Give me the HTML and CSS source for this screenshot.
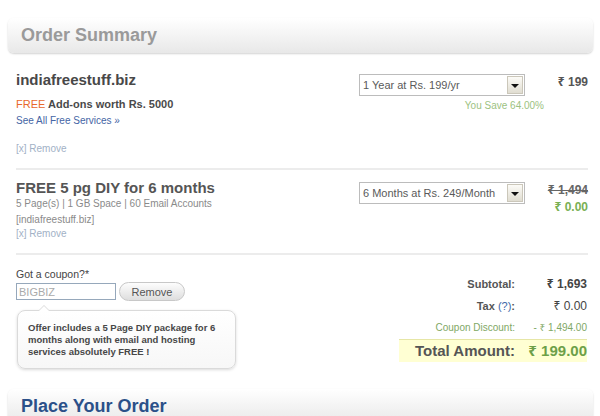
FILE: index.html
```html
<!DOCTYPE html>
<html>
<head>
    <title>Order Summary</title>
    <link rel="stylesheet" href="styles.css">
</head>
<body>
    <div class="page">
        <div class="panel-head">Order Summary</div>

        <div class="item">
            <div class="item-info">
                <div class="item-name">indiafreestuff.biz</div>
                <div class="addons"><span class="free">FREE</span> Add-ons worth Rs. 5000</div>
                <a class="see-all" href="#">See All Free Services &raquo;</a>
                <a class="remove remove-first" href="#">[x] Remove</a>
            </div>
            <div class="item-plan">
                <div class="plan-select">
                    <span class="plan-text">1 Year at Rs. 199/yr</span>
                    <span class="plan-arrow"></span>
                </div>
                <div class="saving">You Save 64.00%</div>
            </div>
            <div class="item-price">
                <div class="price">₹ 199</div>
            </div>
        </div>

        <div class="item item-second">
            <div class="item-info">
                <div class="item-name item-name-alt">FREE 5 pg DIY for 6 months</div>
                <div class="details">5 Page(s) | 1 GB Space | 60 Email Accounts</div>
                <div class="details details-domain">[indiafreestuff.biz]</div>
                <a class="remove" href="#">[x] Remove</a>
            </div>
            <div class="item-plan">
                <div class="plan-select">
                    <span class="plan-text">6 Months at Rs. 249/Month</span>
                    <span class="plan-arrow"></span>
                </div>
            </div>
            <div class="item-price">
                <div class="price price-old">₹ 1,494</div>
                <div class="price price-free">₹ 0.00</div>
            </div>
        </div>

        <div class="checkout">
            <div class="coupon">
                <div class="coupon-label">Got a coupon?*</div>
                <div class="coupon-form">
                    <input class="coupon-input" type="text" value="BIGBIZ">
                    <button class="coupon-button">Remove</button>
                </div>
                <div class="bubble">
                    Offer includes a 5 Page DIY package for 6 months along with email and hosting services absolutely FREE !
                </div>
            </div>

            <div class="totals">
                <div class="totals-row">
                    <span class="totals-label">Subtotal:</span>
                    <span class="totals-value">₹ 1,693</span>
                </div>
                <div class="totals-row">
                    <span class="totals-label">Tax <a class="help" href="#">(?)</a>:</span>
                    <span class="totals-value tax-value">₹ 0.00</span>
                </div>
                <div class="totals-row discount">
                    <span class="totals-label">Coupon Discount:</span>
                    <span class="totals-value">- ₹ 1,494.00</span>
                </div>
                <div class="totals-row grand">
                    <span class="totals-label">Total Amount:</span>
                    <span class="totals-value">₹ 199.00</span>
                </div>
            </div>
        </div>

        <div class="panel-head panel-head-blue">Place Your Order</div>
    </div>
</body>
</html>
```

FILE: styles.css
```css
body {
    margin: 0;
    padding: 0;
    background: #fff;
    font-family: "Liberation Sans", Arial, "Noto Sans", sans-serif;
    color: #444;
    overflow: hidden;
}

.page {
    width: 585px;
    margin-left: 8px;
    padding-top: 18px;
}

/* Panel headers */
.panel-head {
    height: 35px;
    line-height: 35px;
    padding-left: 13px;
    border-radius: 6px;
    background: linear-gradient(#fff, #e8e8e8);
    box-shadow: 0 1px 2px rgba(0, 0, 0, 0.18);
    font-size: 18px;
    font-weight: bold;
    color: #9a9a9a;
}

.panel-head-blue {
    margin-top: 20px;
    color: #2b5089;
}

/* Cart items */
.item {
    display: flex;
    align-items: flex-start;
    margin: 0 5px 0 8px;
    padding: 18px 0 12px;
    border-bottom: 2px solid #ececec;
}

.item-second {
    padding-top: 9px;
}

.item-info {
    flex: 1;
}

.item-name {
    font-size: 15px;
    line-height: 18px;
    font-weight: bold;
    color: #484848;
}

.item-name-alt {
    color: #555;
}

.addons {
    margin-top: 8px;
    font-size: 11px;
    line-height: 15px;
    font-weight: bold;
    color: #4a4a4a;
}

.free {
    font-weight: normal;
    color: #e8682b;
}

.see-all,
.remove {
    display: block;
    font-size: 10px;
    line-height: 14px;
    text-decoration: none;
}

.see-all {
    margin-top: 2px;
    color: #4565a5;
}

.remove {
    color: #a2b1c6;
}

.remove-first {
    margin-top: 14px;
}

.details {
    font-size: 10px;
    line-height: 14px;
    color: #8a8a8a;
}

.details-domain {
    margin-top: 2px;
}

/* Plan dropdown */
.item-plan {
    width: 185px;
    margin-top: 3px;
}

.plan-select {
    display: flex;
    align-items: stretch;
    width: 166px;
    height: 22px;
    box-sizing: border-box;
    border: 1px solid #bcbcbc;
    background: #fff;
}

.plan-text {
    flex: 1;
    padding-left: 3px;
    font-size: 11px;
    line-height: 20px;
    color: #5a5a5a;
    white-space: nowrap;
}

.plan-arrow {
    position: relative;
    width: 14px;
    margin: 1px 1px 1px 0;
    border: 1px solid #cbc7ba;
    background: linear-gradient(#fcfbf7, #e0ddd1);
}

.plan-arrow::after {
    content: "";
    position: absolute;
    left: 3px;
    top: 7px;
    border-left: 4px solid transparent;
    border-right: 4px solid transparent;
    border-top: 4px solid #111;
}

.saving {
    margin-top: 3px;
    font-size: 10px;
    line-height: 14px;
    text-align: right;
    color: #9cc27f;
}

/* Prices */
.item-price {
    width: 44px;
    margin-top: 3px;
    text-align: right;
}

.price {
    font-size: 12px;
    line-height: 17px;
    font-weight: bold;
    color: #555;
    white-space: nowrap;
}

.price-old {
    color: #666;
    text-decoration: line-through;
}

.price-free {
    color: #79b054;
}

/* Coupon and totals */
.checkout {
    display: flex;
    align-items: flex-start;
    justify-content: space-between;
    margin: 0 6px 0 8px;
    padding-top: 12px;
}

.coupon-label {
    font-size: 10.5px;
    line-height: 14px;
    color: #444;
}

.coupon-form {
    display: flex;
    align-items: center;
    gap: 3px;
    margin-top: 1px;
}

.coupon-input {
    width: 100px;
    height: 17px;
    box-sizing: border-box;
    margin: 0;
    padding: 0 2px;
    border: 1px solid #96a8bb;
    font-family: inherit;
    font-size: 11px;
    color: #aaa;
}

.coupon-button {
    width: 66px;
    height: 19px;
    margin: 0;
    padding: 0;
    border: 1px solid #c8c8c8;
    border-radius: 10px;
    background: linear-gradient(#fdfdfd, #dedede);
    font-family: inherit;
    font-size: 11px;
    color: #555;
}

.bubble {
    position: relative;
    width: 219px;
    box-sizing: border-box;
    margin: 9px 0 0 1px;
    padding: 11px 10px 10px;
    border: 1px solid #dadada;
    border-radius: 8px;
    background: linear-gradient(#fff, #f7f7f7);
    box-shadow: 0 1px 3px rgba(0, 0, 0, 0.15);
    font-size: 9.5px;
    line-height: 12px;
    font-weight: bold;
    color: #474747;
}

.bubble::before,
.bubble::after {
    content: "";
    position: absolute;
    left: 20px;
    border-left: 6px solid transparent;
    border-right: 6px solid transparent;
}

.bubble::before {
    top: -6px;
    border-bottom: 6px solid #dadada;
}

.bubble::after {
    top: -5px;
    border-bottom: 6px solid #fff;
}

.totals {
    width: 188px;
    margin-top: 6px;
}

.totals-row {
    display: flex;
    font-size: 11px;
    line-height: 22px;
    font-weight: bold;
    color: #555;
}

.totals-label {
    width: 116px;
    text-align: right;
}

.totals-value {
    flex: 1;
    text-align: right;
    font-size: 12px;
    color: #444;
    white-space: nowrap;
}

.tax-value {
    font-weight: normal;
}

.help {
    font-weight: normal;
    color: #3d67a8;
    text-decoration: none;
}

.discount,
.discount .totals-value {
    font-size: 10px;
    font-weight: normal;
    color: #7fa865;
}

.grand {
    border-top: 1px solid #e6e6a6;
    background: #ffffd3;
    font-size: 15px;
    line-height: 22px;
}

.grand .totals-value {
    font-size: 15px;
    color: #6d9f48;
}
```
